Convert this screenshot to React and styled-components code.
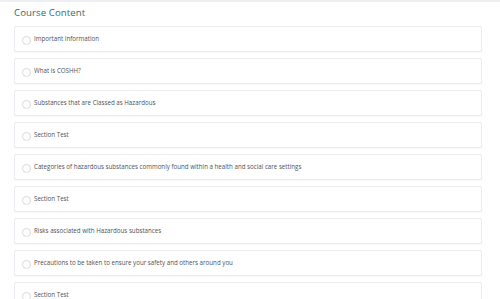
import React from "react";
import styled, { createGlobalStyle } from "styled-components";

const GlobalStyle = createGlobalStyle`
  body {
    margin: 0;
    background: #ffffff;
    font-family: "Open Sans", "Liberation Sans", sans-serif;
  }
`;

const Page = styled.div`
  border-top: 2px solid #eef0f3;
  padding: 4px 0 0 14px;
`;

const Title = styled.h2`
  margin: 0 0 7px;
  font-size: 9.6px;
  font-weight: 500;
  color: #2c6d69;
  line-height: 13px;
  letter-spacing: 0.1px;
`;

const List = styled.div`
  display: flex;
  flex-direction: column;
  gap: 6px;
  width: 468px;
`;

const Card = styled.div`
  display: flex;
  align-items: center;
  gap: 3px;
  height: 26px;
  box-sizing: border-box;
  padding: 0 7px;
  background: #fff;
  border: 1px solid #eaecf1;
  border-radius: 2px;
  box-shadow: 0 1px 1px rgba(20, 30, 60, 0.03);
`;

const Radio = styled.span`
  flex: none;
  width: 9px;
  height: 9px;
  box-sizing: border-box;
  border: 1px solid #d5d9e0;
  border-radius: 50%;
  margin-top: 3px;
`;

const Label = styled.span`
  font-size: 6.2px;
  font-weight: 500;
  color: #4d5258;
  margin-top: -2px;
`;

const lessons = [
  "Important Information",
  "What is COSHH?",
  "Substances that are Classed as Hazardous",
  "Section Test",
  "Categories of hazardous substances commonly found within a health and social care settings",
  "Section Test",
  "Risks associated with Hazardous substances",
  "Precautions to be taken to ensure your safety and others around you",
  "Section Test",
];

export default function App() {
  return (
    <>
      <GlobalStyle />
      <Page>
        <Title>Course Content</Title>
        <List>
          {lessons.map((l, i) => (
            <Card key={i}>
              <Radio />
              <Label>{l}</Label>
            </Card>
          ))}
        </List>
      </Page>
    </>
  );
}
